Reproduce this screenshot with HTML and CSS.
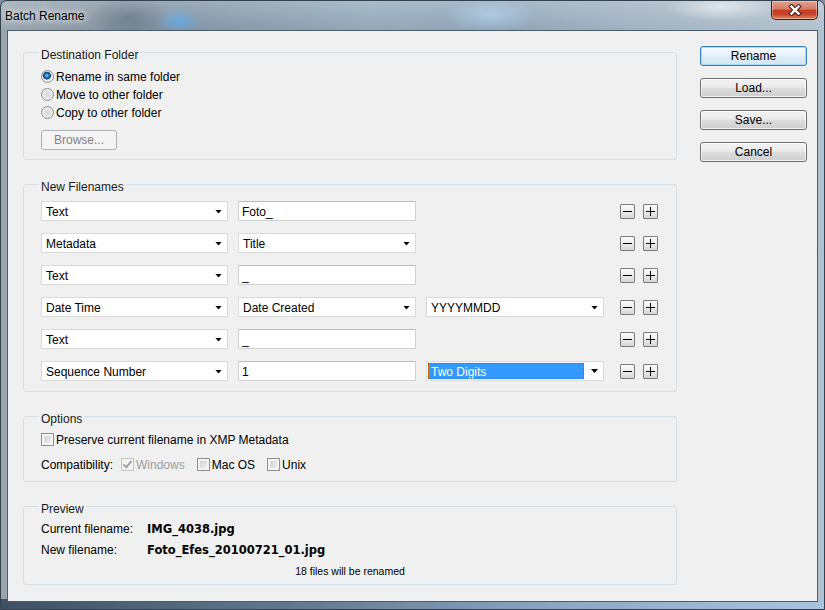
FILE: index.html
```html
<!DOCTYPE html>
<html lang="en">
<head>
    <meta charset="UTF-8">
    <title>Batch Rename</title>
    <link rel="stylesheet" href="styles.css">
</head>
<body>
    <div class="window">
        <header class="titlebar">
            <span class="title">Batch Rename</span>
            <button class="close-btn" aria-label="Close">
                <svg width="14" height="12" viewBox="0 0 14 12">
                    <path d="M3.5 2.5 L10.5 9.5 M10.5 2.5 L3.5 9.5" stroke="#5b2219" stroke-width="4.6" stroke-linecap="square"/>
                    <path d="M3.5 2.5 L10.5 9.5 M10.5 2.5 L3.5 9.5" stroke="#fff" stroke-width="2.4" stroke-linecap="square"/>
                </svg>
            </button>
        </header>

        <div class="client">
            <div class="main">
                <fieldset class="group dest">
                    <legend>Destination Folder</legend>
                    <label class="opt"><span class="radio on"></span>Rename in same folder</label>
                    <label class="opt"><span class="radio"></span>Move to other folder</label>
                    <label class="opt"><span class="radio"></span>Copy to other folder</label>
                    <button class="btn browse" disabled>Browse...</button>
                </fieldset>

                <fieldset class="group names">
                    <legend>New Filenames</legend>
                    <div class="row">
                        <div class="select w1"><span>Text</span><i class="caret"></i></div>
                        <input class="field" type="text" value="Foto_">
                        <div class="slot"></div>
                        <div class="pm"><button class="mini minus"></button><button class="mini plus"></button></div>
                    </div>
                    <div class="row">
                        <div class="select w1"><span>Metadata</span><i class="caret"></i></div>
                        <div class="select w2"><span>Title</span><i class="caret"></i></div>
                        <div class="slot"></div>
                        <div class="pm"><button class="mini minus"></button><button class="mini plus"></button></div>
                    </div>
                    <div class="row">
                        <div class="select w1"><span>Text</span><i class="caret"></i></div>
                        <input class="field" type="text" value="_">
                        <div class="slot"></div>
                        <div class="pm"><button class="mini minus"></button><button class="mini plus"></button></div>
                    </div>
                    <div class="row">
                        <div class="select w1"><span>Date Time</span><i class="caret"></i></div>
                        <div class="select w2"><span>Date Created</span><i class="caret"></i></div>
                        <div class="select w2"><span>YYYYMMDD</span><i class="caret"></i></div>
                        <div class="pm"><button class="mini minus"></button><button class="mini plus"></button></div>
                    </div>
                    <div class="row">
                        <div class="select w1"><span>Text</span><i class="caret"></i></div>
                        <input class="field" type="text" value="_">
                        <div class="slot"></div>
                        <div class="pm"><button class="mini minus"></button><button class="mini plus"></button></div>
                    </div>
                    <div class="row">
                        <div class="select w1"><span>Sequence Number</span><i class="caret"></i></div>
                        <input class="field" type="text" value="1">
                        <div class="select w2 focus"><span class="hl">Two Digits</span><i class="caret"></i></div>
                        <div class="pm"><button class="mini minus"></button><button class="mini plus"></button></div>
                    </div>
                </fieldset>

                <fieldset class="group options">
                    <legend>Options</legend>
                    <label class="opt line"><span class="check"></span>Preserve current filename in XMP Metadata</label>
                    <div class="compat">
                        <span class="compat-label">Compatibility:</span>
                        <label class="opt disabled"><span class="check on"></span>Windows</label>
                        <label class="opt"><span class="check"></span>Mac OS</label>
                        <label class="opt"><span class="check"></span>Unix</label>
                    </div>
                </fieldset>

                <fieldset class="group preview">
                    <legend>Preview</legend>
                    <div class="pv">
                        <span>Current filename:</span>
                        <span class="val">IMG_4038.jpg</span>
                        <span>New filename:</span>
                        <span class="val">Foto_Efes_20100721_01.jpg</span>
                        <span class="note">18 files will be renamed</span>
                    </div>
                </fieldset>
            </div>

            <div class="actions">
                <button class="btn default">Rename</button>
                <button class="btn">Load...</button>
                <button class="btn">Save...</button>
                <button class="btn">Cancel</button>
            </div>
        </div>
    </div>
</body>
</html>
```

FILE: styles.css
```css
* {
    box-sizing: border-box;
}

body {
    margin: 0;
    font-family: "Liberation Sans", Arial, sans-serif;
    font-size: 12px;
    color: #000;
    background: #7d8fa0;
}

/* aero glass frame */
.window {
    width: 825px;
    height: 610px;
    display: flex;
    flex-direction: column;
    border: 1px solid #34414e;
    border-radius: 7px 7px 0 0;
    overflow: hidden;
    background:
        linear-gradient(to bottom, rgba(255,255,255,0.22), rgba(255,255,255,0) 30px),
        radial-gradient(ellipse 22px 14px at 178px 20px, #5fa2db, rgba(95,162,219,0)),
        radial-gradient(ellipse 45px 18px at 490px 14px, rgba(165,198,226,0.9), rgba(165,198,226,0)),
        radial-gradient(ellipse 55px 14px at 720px 6px, rgba(232,234,237,0.8), rgba(232,234,237,0)),
        radial-gradient(ellipse 40px 22px at 128px 16px, rgba(88,104,120,0.7), rgba(88,104,120,0)),
        linear-gradient(to right, #3f5063, #5f7891 35%, #8eaac6 70%, #a9c4de) bottom / 100% 10px no-repeat,
        linear-gradient(to right, #9aa5ae, #8795a2 12%, #7f91a1 20%, #93a7b9 45%, #8ea3b6 60%, #a3b3c1 80%, #b2c1ce);
}

.titlebar {
    height: 29px;
    display: flex;
    justify-content: space-between;
    align-items: flex-start;
    padding-left: 4px;
}

.title {
    padding-top: 8px;
    line-height: 14px;
    text-shadow: 0 0 6px #fff, 0 0 10px rgba(255,255,255,0.8);
}

.close-btn {
    width: 47px;
    height: 19px;
    margin-right: 6px;
    padding: 0;
    display: flex;
    align-items: center;
    justify-content: center;
    border: 1px solid #4b1b14;
    border-top: none;
    border-radius: 0 0 5px 5px;
    background: linear-gradient(#e4a190 0%, #d77a66 45%, #c43b22 52%, #c8452c 75%, #de8a6a 100%);
    box-shadow: inset 0 0 0 1px rgba(255,255,255,0.35);
}

.client {
    flex: 1;
    margin: 0 6px 7px 6px;
    border: 1px solid #4d5d6d;
    background: #f0f0f0;
    display: flex;
    gap: 23px;
    padding: 11px 10px 0 15px;
}

.main {
    width: 654px;
}

/* group boxes */
.group {
    margin: 0;
    border: 1px solid #d5dfe5;
    border-radius: 3px;
    padding: 5px 17px 9px 17px;
}

.group legend {
    padding: 6px 2px 0;
    margin-left: -2px;
    line-height: 14px;
    color: #1a1a1a;
}

.names {
    margin-top: 14px;
    padding-top: 7px;
    padding-bottom: 10px;
}

.options {
    margin-top: 14px;
}

.preview {
    margin-top: 14px;
    padding-top: 3px;
    padding-bottom: 2px;
}

.opt {
    display: flex;
    align-items: center;
    gap: 2px;
    height: 18px;
    padding-top: 1px;
}

.opt.line {
    height: 16px;
}

.opt.disabled {
    color: #9d9d9d;
}

.radio {
    width: 13px;
    height: 13px;
    border-radius: 50%;
    border: 1px solid #8b8d8f;
    background: radial-gradient(circle at 50% 50%, #d3d5d8 0, #e6e8ea 55%, #f8f8f8 100%);
}

.radio.on {
    background: radial-gradient(circle at 45% 42%, #9ad3f5 0, #2c7cc2 1.8px, #10406f 3.6px, #d8dde2 4.2px, #f6f6f6 6px);
}

.check {
    position: relative;
    width: 13px;
    height: 13px;
    border: 1px solid #8f8f8f;
    background: linear-gradient(135deg, #c9cdd2, #f4f4f4);
    box-shadow: inset 0 0 0 2px #f4f4f4;
}

.disabled .check {
    border-color: #c4c4c4;
    background: #f4f4f4;
    box-shadow: none;
}

.check.on::after {
    content: '';
    position: absolute;
    left: 3px;
    top: 0;
    width: 3px;
    height: 7px;
    border: solid #a3a3a3;
    border-width: 0 2px 2px 0;
    transform: rotate(40deg);
}

.compat {
    display: flex;
    align-items: center;
    gap: 12px;
    height: 16px;
    margin-top: 9px;
}

.compat-label {
    margin-right: -4px;
    padding-top: 1px;
}

/* filename rows */
.row {
    display: flex;
    align-items: center;
    gap: 10px;
    height: 20px;
}

.row + .row {
    margin-top: 12px;
}

.select,
.field,
.slot {
    height: 20px;
}

.w1 {
    width: 187px;
}

.w2,
.field,
.slot {
    width: 178px;
}

.select {
    display: flex;
    align-items: center;
    justify-content: space-between;
    padding: 1px 5px 0 4px;
    background: #fff;
    border: 1px solid #dadada;
}

.select.focus {
    padding: 1px 5px 1px 1px;
}

.hl {
    flex: 1;
    align-self: stretch;
    display: flex;
    align-items: center;
    margin-right: 7px;
    padding: 1px 0 0 3px;
    background: #3399ff;
    color: #fff;
    outline: 1px dotted #b45a00;
    outline-offset: -1px;
}

.caret {
    width: 7px;
    height: 4px;
    background: #000;
    clip-path: polygon(0 0, 100% 0, 50% 100%);
}

.field {
    padding: 1px 3px 0;
    border: 1px solid #d0d0d0;
    border-top-color: #bdbdbd;
    background: #fff;
    font: inherit;
    color: #000;
}

.pm {
    display: flex;
    gap: 8px;
    margin-left: 6px;
}

.mini {
    position: relative;
    width: 15px;
    height: 15px;
    padding: 0;
    border: 1px solid #7b7b7b;
    border-radius: 1px;
    background: linear-gradient(#fdfdfd, #ececec 50%, #d6d6d6);
}

.mini::before,
.plus::after {
    content: '';
    position: absolute;
    background: #000;
}

.mini::before {
    left: 2px;
    top: 6px;
    width: 9px;
    height: 1px;
}

.plus::after {
    left: 6px;
    top: 2px;
    width: 1px;
    height: 9px;
}

/* preview */
.pv {
    display: grid;
    grid-template-columns: 106px 1fr;
    line-height: 21px;
}

.val {
    font-family: "DejaVu Sans", sans-serif;
    font-weight: bold;
    font-size: 11.5px;
}

.note {
    grid-column: 1 / -1;
    text-align: center;
    font-size: 10.5px;
}

/* buttons */
.actions {
    width: 107px;
    margin-top: 4px;
    display: flex;
    flex-direction: column;
    gap: 12px;
}

.btn {
    height: 20px;
    padding: 0;
    font: inherit;
    color: #000;
    border: 1px solid #707070;
    border-radius: 3px;
    background: linear-gradient(#f2f2f2, #ebebeb 45%, #dddddd 50%, #cfcfcf);
    box-shadow: inset 0 0 0 1px rgba(255,255,255,0.7);
}

.btn.default {
    border-color: #3c7fb1;
    background: linear-gradient(#f4f9fc, #ebf4fa 45%, #deedf7 50%, #d2e6f3);
    box-shadow: inset 0 0 0 1px #a8dcf6;
}

.btn.browse {
    width: 76px;
    margin-top: 9px;
    color: #838383;
    border-color: #adb2b5;
    background: #f4f4f4;
    box-shadow: none;
}
```
